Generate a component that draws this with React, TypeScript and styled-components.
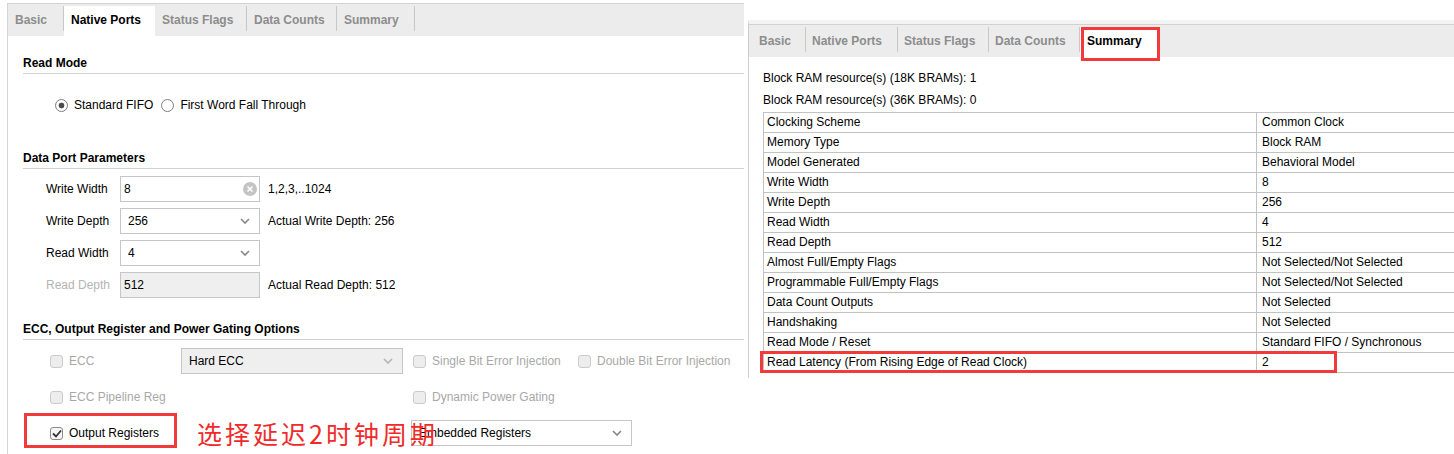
import React from 'react';
import styled, { createGlobalStyle } from 'styled-components';

const GlobalStyle = createGlobalStyle`
  html, body {
    margin: 0;
    padding: 0;
    background: #fff;
  }
  body {
    font-family: 'Liberation Sans', Arial, sans-serif;
    font-size: 12px;
    color: #000;
  }
`;

const Page = styled.div`
  display: flex;
  width: 1454px;
  height: 454px;
  overflow: hidden;
  background: #fff;
`;

/* ---------- shared tab strip ---------- */

const TabBar = styled.div<{ $ruled?: boolean }>`
  display: flex;
  height: ${p => (p.$ruled ? 33 : 32)}px;
  padding-top: 2px;
  box-sizing: border-box;
  background: #ececec;
  border-top: ${p => (p.$ruled ? '1px solid #d2d2d2' : 'none')};
`;

const Tab = styled.div<{ $w: number; $pad: number; $active?: boolean }>`
  position: relative;
  flex: none;
  display: flex;
  align-items: center;
  width: ${p => p.$w}px;
  padding: 0 0 2px ${p => p.$pad}px;
  box-sizing: border-box;
  font-weight: bold;
  color: ${p => (p.$active ? '#000' : '#8c8c8c')};
  background: ${p =>
    p.$active
      ? '#fff'
      : 'linear-gradient(#c8c8c8, #c8c8c8) right 0 top 0 / 1px 25px no-repeat'};
`;

const Highlight = styled.span<{ $l: number; $t: number; $w: number; $h: number }>`
  position: absolute;
  left: ${p => p.$l}px;
  top: ${p => p.$t}px;
  width: ${p => p.$w}px;
  height: ${p => p.$h}px;
  box-sizing: border-box;
  border: 3px solid #f33a3a;
  pointer-events: none;
`;

/* ---------- left: Native Ports page ---------- */

const LeftPanel = styled.div`
  flex: none;
  width: 748px;
  padding-top: 3px;
  box-sizing: border-box;
`;

const Frame = styled.div`
  margin-left: 7px;
  width: 737px;
  height: 451px;
  box-sizing: border-box;
  border-top: 1px solid #d4d4d4;
  border-left: 1px solid #d4d4d4;
`;

const Body = styled.div`
  padding: 20px 0 0 15px;
`;

const SectionTitle = styled.div<{ $gap?: number }>`
  margin-top: ${p => p.$gap ?? 0}px;
  padding-bottom: 3px;
  line-height: 14px;
  font-weight: bold;
  border-bottom: 1px solid #d2d2d2;
`;

const RadioRow = styled.div`
  display: flex;
  align-items: center;
  gap: 8px;
  height: 16px;
  margin-top: 23px;
  padding-left: 32px;
`;

const RadioItem = styled.label`
  display: flex;
  align-items: center;
  gap: 6px;
`;

const RadioDot = styled.span<{ $on?: boolean }>`
  width: 13px;
  height: 13px;
  box-sizing: border-box;
  border-radius: 50%;
  border: 1px solid #7d7d7d;
  background: ${p =>
    p.$on
      ? 'radial-gradient(circle, #4a4a4a 0 2.6px, #fff 3.2px)'
      : '#fff'};
`;

const Params = styled.div`
  display: flex;
  flex-direction: column;
  gap: 6px;
  margin-top: 7px;
  padding-left: 23px;
`;

const ParamRow = styled.div`
  display: flex;
  align-items: center;
  height: 26px;
`;

const ParamLabel = styled.span<{ $muted?: boolean }>`
  width: 74px;
  color: ${p => (p.$muted ? '#b4b4b4' : '#000')};
`;

const Field = styled.div<{ $w?: number; $pad?: number; $disabled?: boolean }>`
  display: flex;
  align-items: center;
  justify-content: space-between;
  width: ${p => p.$w ?? 140}px;
  height: 26px;
  padding: 0 9px 0 ${p => p.$pad ?? 3}px;
  box-sizing: border-box;
  border: 1px solid #c6c6c6;
  background: ${p => (p.$disabled ? '#efefef' : '#fff')};
`;

const Hint = styled.span`
  margin-left: 8px;
`;

const Options = styled.div`
  display: grid;
  grid-template-columns: 131px 232px 165px 1fr;
  grid-auto-rows: 26px;
  row-gap: 10px;
  align-items: center;
  margin-top: 8px;
  padding-left: 27px;
`;

const Check = styled.label<{ $disabled?: boolean }>`
  position: relative;
  align-self: stretch;
  display: flex;
  align-items: center;
  gap: 6px;
  color: ${p => (p.$disabled ? '#a8a8a8' : '#000')};
  white-space: nowrap;
`;

const Box = styled.span<{ $on?: boolean }>`
  display: flex;
  align-items: center;
  justify-content: center;
  width: 13px;
  height: 13px;
  box-sizing: border-box;
  border-radius: 3px;
  border: 1px solid ${p => (p.$on ? '#8c8c8c' : '#cbcbcb')};
  background: ${p => (p.$on ? '#f6f6f6' : '#ededed')};
`;

const SpanSelect = styled.div`
  grid-column: 3 / 5;
`;

const Note = styled.span`
  position: absolute;
  left: 147px;
  top: -2px;
  z-index: 2;
  font-family: 'Noto Sans CJK SC', sans-serif;
  font-size: 25px;
  line-height: 30px;
  letter-spacing: 3px;
  color: #f02a2a;
  white-space: nowrap;
`;

/* ---------- right: Summary page ---------- */

const RightPanel = styled.div`
  flex: 1;
  margin-top: 20px;
  height: 358px;
  box-sizing: border-box;
  border-top: 4px solid #f4f4f4;
  border-left: 1px solid #cdcdcd;
`;

const SummaryBody = styled.div`
  padding: 10px 0 0 14px;
`;

const InfoLine = styled.div`
  line-height: 22px;
`;

const Table = styled.div`
  margin-top: 1px;
  border-top: 1px solid #c2c2c2;
  border-left: 1px solid #c2c2c2;
`;

const Row = styled.div`
  position: relative;
  display: grid;
  grid-template-columns: 492px 1fr;
  height: 20px;
  box-sizing: border-box;
  border-bottom: 1px solid #c2c2c2;
`;

const Cell = styled.div<{ $value?: boolean }>`
  padding-left: ${p => (p.$value ? 5 : 3)}px;
  line-height: 19px;
  white-space: nowrap;
  border-left: ${p => (p.$value ? '1px solid #c2c2c2' : 'none')};
`;

/* ---------- little drawings ---------- */

const Chevron = ({ color = '#858585' }: { color?: string }) => (
  <svg width="10" height="6" viewBox="0 0 10 6">
    <polyline points="1,1 5,5 9,1" fill="none" stroke={color} strokeWidth="1.6" />
  </svg>
);

const ClearIcon = () => (
  <svg width="14" height="14" viewBox="0 0 14 14">
    <circle cx="7" cy="7" r="7" fill="#c4c4c4" />
    <path d="M4.5 4.5 L9.5 9.5 M9.5 4.5 L4.5 9.5" stroke="#fff" strokeWidth="1.6" />
  </svg>
);

const Tick = () => (
  <svg width="10" height="9" viewBox="0 0 10 9">
    <polyline points="1,4.5 4,7.5 9,1.5" fill="none" stroke="#333" strokeWidth="1.8" />
  </svg>
);

const leftTabs = [
  { label: 'Basic', w: 56 },
  { label: 'Native Ports', w: 91, active: true },
  { label: 'Status Flags', w: 92 },
  { label: 'Data Counts', w: 90 },
  { label: 'Summary', w: 78 },
];

const rightTabs = [
  { label: 'Basic', w: 57, pad: 10 },
  { label: 'Native Ports', w: 92, pad: 6 },
  { label: 'Status Flags', w: 91, pad: 6 },
  { label: 'Data Counts', w: 91, pad: 6 },
  { label: 'Summary', w: 80, pad: 7, active: true },
];

const summary: [string, string][] = [
  ['Clocking Scheme', 'Common Clock'],
  ['Memory Type', 'Block RAM'],
  ['Model Generated', 'Behavioral Model'],
  ['Write Width', '8'],
  ['Write Depth', '256'],
  ['Read Width', '4'],
  ['Read Depth', '512'],
  ['Almost Full/Empty Flags', 'Not Selected/Not Selected'],
  ['Programmable Full/Empty Flags', 'Not Selected/Not Selected'],
  ['Data Count Outputs', 'Not Selected'],
  ['Handshaking', 'Not Selected'],
  ['Read Mode / Reset', 'Standard FIFO / Synchronous'],
  ['Read Latency (From Rising Edge of Read Clock)', '2'],
];

const App: React.FC = () => {
  return (
    <>
      <GlobalStyle />
      <Page>
        <LeftPanel>
          <Frame>
            <TabBar>
              {leftTabs.map(t => (
                <Tab key={t.label} $w={t.w} $pad={7} $active={t.active}>
                  {t.label}
                </Tab>
              ))}
            </TabBar>

            <Body>
              <SectionTitle>Read Mode</SectionTitle>
              <RadioRow>
                <RadioItem>
                  <RadioDot $on />
                  Standard FIFO
                </RadioItem>
                <RadioItem>
                  <RadioDot />
                  First Word Fall Through
                </RadioItem>
              </RadioRow>

              <SectionTitle $gap={38}>Data Port Parameters</SectionTitle>
              <Params>
                <ParamRow>
                  <ParamLabel>Write Width</ParamLabel>
                  <Field $pad={3} style={{ paddingRight: 2 }}>
                    8
                    <ClearIcon />
                  </Field>
                  <Hint>1,2,3,..1024</Hint>
                </ParamRow>
                <ParamRow>
                  <ParamLabel>Write Depth</ParamLabel>
                  <Field $pad={7}>
                    256
                    <Chevron />
                  </Field>
                  <Hint>Actual Write Depth: 256</Hint>
                </ParamRow>
                <ParamRow>
                  <ParamLabel>Read Width</ParamLabel>
                  <Field $pad={7}>
                    4
                    <Chevron />
                  </Field>
                </ParamRow>
                <ParamRow>
                  <ParamLabel $muted>Read Depth</ParamLabel>
                  <Field $pad={3} $disabled>
                    512
                  </Field>
                  <Hint>Actual Read Depth: 512</Hint>
                </ParamRow>
              </Params>

              <SectionTitle $gap={24}>ECC, Output Register and Power Gating Options</SectionTitle>
              <Options>
                <Check $disabled>
                  <Box />
                  ECC
                </Check>
                <Field $w={222} $pad={7} $disabled>
                  Hard ECC
                  <Chevron color="#b4b4b4" />
                </Field>
                <Check $disabled>
                  <Box />
                  Single Bit Error Injection
                </Check>
                <Check $disabled>
                  <Box />
                  Double Bit Error Injection
                </Check>

                <Check $disabled>
                  <Box />
                  ECC Pipeline Reg
                </Check>
                <span />
                <Check $disabled>
                  <Box />
                  Dynamic Power Gating
                </Check>
                <span />

                <Check>
                  <Box $on>
                    <Tick />
                  </Box>
                  Output Registers
                  <Highlight $l={-26} $t={-7} $w={153} $h={35} />
                  <Note>选择延迟2时钟周期</Note>
                </Check>
                <span />
                <SpanSelect>
                  <Field $w={221} $pad={7} style={{ marginLeft: -2 }}>
                    Embedded Registers
                    <Chevron />
                  </Field>
                </SpanSelect>
              </Options>
            </Body>
          </Frame>
        </LeftPanel>

        <RightPanel>
          <TabBar $ruled>
            {rightTabs.map(t => (
              <Tab key={t.label} $w={t.w} $pad={t.pad} $active={t.active}>
                {t.label}
                {t.active && <Highlight $l={1} $t={0} $w={79} $h={34} />}
              </Tab>
            ))}
          </TabBar>

          <SummaryBody>
            <InfoLine>Block RAM resource(s) (18K BRAMs): 1</InfoLine>
            <InfoLine>Block RAM resource(s) (36K BRAMs): 0</InfoLine>
            <Table>
              {summary.map(([k, v], i) => (
                <Row key={k}>
                  <Cell>{k}</Cell>
                  <Cell $value>{v}</Cell>
                  {i === summary.length - 1 && <Highlight $l={-4} $t={-2} $w={577} $h={22} />}
                </Row>
              ))}
            </Table>
          </SummaryBody>
        </RightPanel>
      </Page>
    </>
  );
};

export default App;
